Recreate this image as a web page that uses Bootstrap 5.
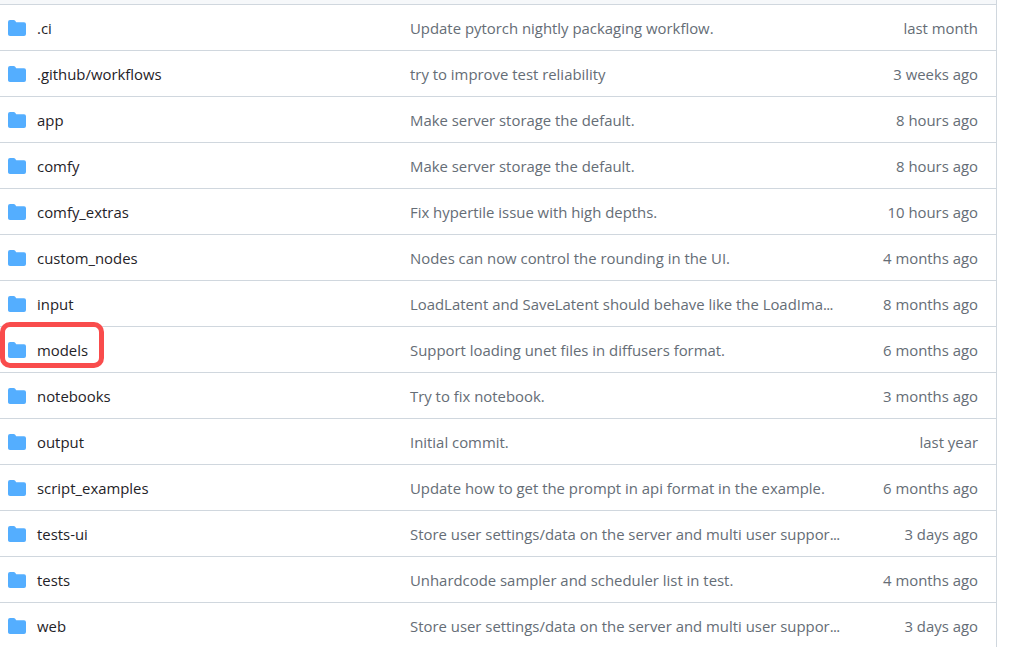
<!DOCTYPE html>
<html lang="en"><head><meta charset="utf-8"><title>Files</title>
<link href="https://cdn.jsdelivr.net/npm/bootstrap@5.3.0/dist/css/bootstrap.min.css" rel="stylesheet">
<style>
html,body{height:647px;overflow:hidden;background:#fff}
body{font-family:"Open Sans","Noto Sans",sans-serif;font-size:14.9px;position:relative}
.repo-wrap{width:997px;height:647px;border-right:1px solid #d0d7de}
.repo-head{height:4px;background:#f6f8fa}
.repo-row{height:46px;border-top:1px solid #d0d7de;padding-top:2px}
.repo-icon{width:18px;height:16px;margin-left:8px;flex:none;margin-right:11px;margin-top:-1px}
.repo-name{width:373px;flex:none;color:#1f2328}
.repo-msg{width:430px;flex:none;color:#656d76;white-space:nowrap}
.repo-age{width:138px;flex:none;text-align:right;color:#656d76}
.repo-dots{letter-spacing:-.6px}
.repo-mark{position:absolute;left:0;top:322px;width:104px;height:46px;border:5px solid #f94c4c;border-radius:10px}
</style></head><body>
<svg width="0" height="0" class="d-block"><symbol id="dir" viewBox="0 1 16 14" preserveAspectRatio="none"><path fill="#54aeff" d="M1.75 1A1.75 1.75 0 0 0 0 2.75v10.5C0 14.216.784 15 1.75 15h12.5A1.75 1.75 0 0 0 16 13.25v-8.5A1.75 1.75 0 0 0 14.25 3H7.5a.25.25 0 0 1-.2-.1l-.9-1.2C6.07 1.26 5.55 1 5 1H1.75Z"/></symbol></svg>
<div class="repo-wrap">
<div class="repo-head"></div>
<div class="repo-row d-flex align-items-center"><svg class="repo-icon"><use href="#dir"/></svg><span class="repo-name">.ci</span><span class="repo-msg">Update pytorch nightly packaging workflow.</span><span class="repo-age">last month</span></div>
<div class="repo-row d-flex align-items-center"><svg class="repo-icon"><use href="#dir"/></svg><span class="repo-name">.github/workflows</span><span class="repo-msg">try to improve test reliability</span><span class="repo-age">3 weeks ago</span></div>
<div class="repo-row d-flex align-items-center"><svg class="repo-icon"><use href="#dir"/></svg><span class="repo-name">app</span><span class="repo-msg">Make server storage the default.</span><span class="repo-age">8 hours ago</span></div>
<div class="repo-row d-flex align-items-center"><svg class="repo-icon"><use href="#dir"/></svg><span class="repo-name">comfy</span><span class="repo-msg">Make server storage the default.</span><span class="repo-age">8 hours ago</span></div>
<div class="repo-row d-flex align-items-center"><svg class="repo-icon"><use href="#dir"/></svg><span class="repo-name">comfy_extras</span><span class="repo-msg">Fix hypertile issue with high depths.</span><span class="repo-age">10 hours ago</span></div>
<div class="repo-row d-flex align-items-center"><svg class="repo-icon"><use href="#dir"/></svg><span class="repo-name">custom_nodes</span><span class="repo-msg">Nodes can now control the rounding in the UI.</span><span class="repo-age">4 months ago</span></div>
<div class="repo-row d-flex align-items-center"><svg class="repo-icon"><use href="#dir"/></svg><span class="repo-name">input</span><span class="repo-msg">LoadLatent and SaveLatent should behave like the LoadIma<span class="repo-dots">...</span></span><span class="repo-age">8 months ago</span></div>
<div class="repo-row d-flex align-items-center"><svg class="repo-icon"><use href="#dir"/></svg><span class="repo-name">models</span><span class="repo-msg">Support loading unet files in diffusers format.</span><span class="repo-age">6 months ago</span></div>
<div class="repo-row d-flex align-items-center"><svg class="repo-icon"><use href="#dir"/></svg><span class="repo-name">notebooks</span><span class="repo-msg">Try to fix notebook.</span><span class="repo-age">3 months ago</span></div>
<div class="repo-row d-flex align-items-center"><svg class="repo-icon"><use href="#dir"/></svg><span class="repo-name">output</span><span class="repo-msg">Initial commit.</span><span class="repo-age">last year</span></div>
<div class="repo-row d-flex align-items-center"><svg class="repo-icon"><use href="#dir"/></svg><span class="repo-name">script_examples</span><span class="repo-msg">Update how to get the prompt in api format in the example.</span><span class="repo-age">6 months ago</span></div>
<div class="repo-row d-flex align-items-center"><svg class="repo-icon"><use href="#dir"/></svg><span class="repo-name">tests-ui</span><span class="repo-msg">Store user settings/data on the server and multi user suppor<span class="repo-dots">...</span></span><span class="repo-age">3 days ago</span></div>
<div class="repo-row d-flex align-items-center"><svg class="repo-icon"><use href="#dir"/></svg><span class="repo-name">tests</span><span class="repo-msg">Unhardcode sampler and scheduler list in test.</span><span class="repo-age">4 months ago</span></div>
<div class="repo-row d-flex align-items-center"><svg class="repo-icon"><use href="#dir"/></svg><span class="repo-name">web</span><span class="repo-msg">Store user settings/data on the server and multi user suppor<span class="repo-dots">...</span></span><span class="repo-age">3 days ago</span></div>
</div>
<div class="repo-mark"></div>
<script src="https://cdn.jsdelivr.net/npm/bootstrap@5.3.0/dist/js/bootstrap.bundle.min.js"></script>
</body></html>
